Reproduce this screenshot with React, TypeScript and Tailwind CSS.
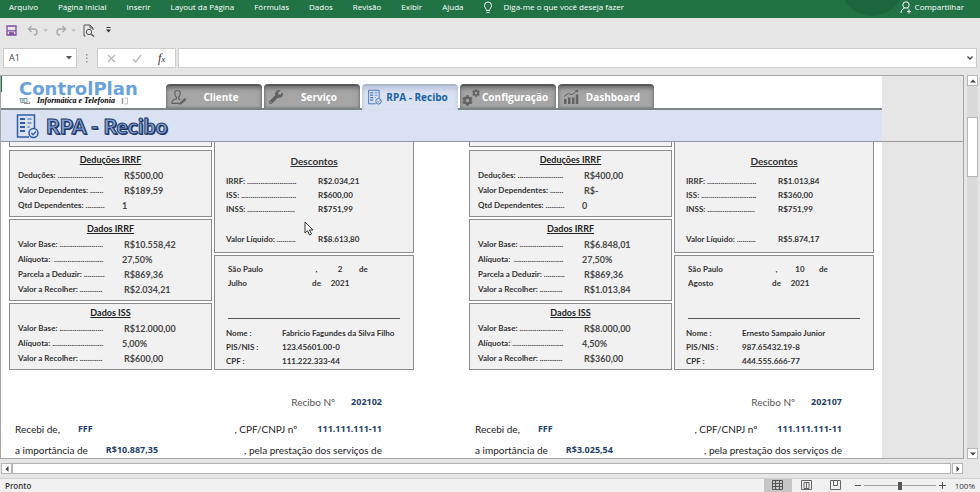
import type { ReactNode } from "react";
import { FaCog, FaWrench } from "react-icons/fa";

const menu = [
  "Arquivo",
  "Página Inicial",
  "Inserir",
  "Layout da Página",
  "Fórmulas",
  "Dados",
  "Revisão",
  "Exibir",
  "Ajuda",
];

type Row = [label: string, value: string];

type Slip = {
  deducoes: Row[];
  irrf: Row[];
  iss: Row[];
  descontos: Row[];
  liquido: string;
  dia: string;
  mes: string;
  pessoa: Row[];
  recibo: string;
  valor: string;
};

const slips: Slip[] = [
  {
    deducoes: [
      ["Deduções: ........................", "R$500,00"],
      ["Valor Dependentes: .......", "R$189,59"],
      ["Qtd Dependentes: ..........", "1"],
    ],
    irrf: [
      ["Valor Base: .......................", "R$10.558,42"],
      ["Alíquota:  ..........................", "27,50%"],
      ["Parcela a Deduzir: ...........", "R$869,36"],
      ["Valor a Recolher: ............", "R$2.034,21"],
    ],
    iss: [
      ["Valor Base: .......................", "R$12.000,00"],
      ["Alíquota: ...........................", "5,00%"],
      ["Valor a Recolher: ............", "R$600,00"],
    ],
    descontos: [
      ["IRRF: ..........................", "R$2.034,21"],
      ["ISS: .............................", "R$600,00"],
      ["INSS: .........................", "R$751,99"],
    ],
    liquido: "R$8.613,80",
    dia: "2",
    mes: "Julho",
    pessoa: [
      ["Nome :", "Fabricio Fagundes da Silva Filho"],
      ["PIS/NIS :", "123.45601.00-0"],
      ["CPF :", "111.222.333-44"],
    ],
    recibo: "202102",
    valor: "R$10.887,35",
  },
  {
    deducoes: [
      ["Deduções: ........................", "R$400,00"],
      ["Valor Dependentes: .......", "R$-"],
      ["Qtd Dependentes: ..........", "0"],
    ],
    irrf: [
      ["Valor Base: .......................", "R$6.848,01"],
      ["Alíquota:  ..........................", "27,50%"],
      ["Parcela a Deduzir: ...........", "R$869,36"],
      ["Valor a Recolher: ............", "R$1.013,84"],
    ],
    iss: [
      ["Valor Base: .......................", "R$8.000,00"],
      ["Alíquota: ...........................", "4,50%"],
      ["Valor a Recolher: ............", "R$360,00"],
    ],
    descontos: [
      ["IRRF: ..........................", "R$1.013,84"],
      ["ISS: .............................", "R$360,00"],
      ["INSS: .........................", "R$751,99"],
    ],
    liquido: "R$5.874,17",
    dia: "10",
    mes: "Agosto",
    pessoa: [
      ["Nome :", "Ernesto Sampaio Junior"],
      ["PIS/NIS :", "987.65432.19-8"],
      ["CPF :", "444.555.666-77"],
    ],
    recibo: "202107",
    valor: "R$3.025,54",
  },
];

function ReceiptIcon({ className }: { className: string }) {
  return (
    <svg viewBox="0 0 24 26" className={className} fill="none" stroke="currentColor" strokeWidth="1.5">
      <path d="M14 24H2.5V2h17v13" />
      <path d="M5 6h5M5 10h5M5 14h5M5 18h5" strokeWidth="1.8" />
      <path d="M12.5 6h4M12.5 10h4M12.5 14h2" strokeWidth="1.2" />
      <circle cx="18.5" cy="20" r="4.5" />
      <path d="m16.300 20 1.700 1.700 3-3.200" strokeWidth="1.3" />
    </svg>
  );
}

function ClientIcon() {
  return (
    <svg viewBox="0 0 16 16" className="size-4" fill="none" stroke="currentColor" strokeWidth="1.2">
      <path d="M6.500 1.500C4 1.500 3.600 3.300 3.800 5c.2 1.600.9 2.600 1.600 3.200v1.600L1.800 11.200C1 11.700 1 13 1 14.300h7.200" />
      <path d="M6.500 1.500C9 1.500 9.400 3.300 9.200 5c-.2 1.600-.9 2.600-1.600 3.200v1.600l1.600.8" />
      <path d="m8.800 13.800 5-4.600 1.500 1.600-5 4.200-2 .3z" fill="currentColor" strokeWidth=".5" />
    </svg>
  );
}

function ChartIcon() {
  return (
    <svg viewBox="0 0 16 16" className="size-4" fill="currentColor">
      <path d="M1 10h2.500v5H1zM5 8.500h2.500V15H5zM9 8.500h2.500V15H9zM12.800 5.500h2.500V15h-2.500z" />
      <path d="m1 7.500 4.500-3.200 3.500 1.400 5-3.900" fill="none" stroke="currentColor" strokeWidth="1" />
      <path d="m12 1 3.200-.3L14.600 4z" />
    </svg>
  );
}

function GearsIcon() {
  return (
    <span className="-ml-[3px] flex shrink-0 items-center">
      <FaCog className="mt-[6px] size-[11px] shrink-0" />
      <FaCog className="mb-[9px] -ml-px size-[8px] shrink-0" />
    </span>
  );
}

const tabs: { name: string; icon: ReactNode; active?: boolean }[] = [
  { name: "Cliente", icon: <ClientIcon /> },
  { name: "Serviço", icon: <FaWrench className="size-[14px]" /> },
  { name: "RPA - Recibo", icon: <ReceiptIcon className="h-4 w-[15px]" />, active: true },
  { name: "Configuração", icon: <GearsIcon /> },
  { name: "Dashboard", icon: <ChartIcon /> },
];

function Ribbon() {
  return (
    <nav className="relative flex h-[18px] shrink-0 items-start overflow-hidden bg-[#217346] pr-4 pl-[9px] font-['Open_Sans',sans-serif] text-[8px] leading-[14px] text-white">
      <span className="absolute -top-12 right-[76px] size-16 rounded-full bg-[#1c653d]" />
      <div className="flex gap-5">
        {menu.map((m) => (
          <button key={m} type="button">
            {m}
          </button>
        ))}
      </div>
      <button type="button" className="ml-5 flex gap-[10px]">
        <svg viewBox="0 0 10 13" className="mt-px h-[13px] w-[10px]" fill="none" stroke="currentColor">
          <path d="M3.500 9.500C3.500 7.500 1.500 7 1.500 4.500a3.500 3.500 0 0 1 7 0c0 2.500-2 3-2 5zM3.500 11.500h3" />
        </svg>
        Diga-me o que você deseja fazer
      </button>
      <button type="button" className="relative ml-auto flex gap-[3px]">
        <svg viewBox="0 0 12 13" className="mt-px h-[13px] w-3" fill="none" stroke="currentColor">
          <circle cx="6" cy="4" r="3.200" />
          <path d="M1 12c0-3 1.500-4 3.500-4.800M7.500 7.200l1 .6M9 8.500v4M7 10.500h4" />
        </svg>
        Compartilhar
      </button>
    </nav>
  );
}

function QuickAccess() {
  return (
    <div className="flex h-[30px] shrink-0 items-center pb-[6px] pl-[6px] text-[#a8a8a8]">
      <button type="button" aria-label="Salvar">
        <svg viewBox="0 0 11 11" className="size-[11px]" fill="none" stroke="#7b4fa3" strokeWidth="1.300">
          <path d="M1 1h9v9H1z" />
          <path d="M1 5.800h9" />
          <path d="M3 7.200h5V10H3z" fill="#7b4fa3" stroke="none" />
        </svg>
      </button>
      <button type="button" aria-label="Desfazer" className="ml-[10px] flex items-center gap-[4px]">
        <svg viewBox="0 0 12 11" className="h-[11px] w-3" fill="none" stroke="currentColor" strokeWidth="1.400">
          <path d="M4.500 1 1.500 4l3 3M1.500 4h5.500c4 0 4 6 0 6" />
        </svg>
        <svg viewBox="0 0 5 3" className="h-[3px] w-[5px]" fill="#c4c4c4">
          <path d="M0 0h5L2.500 3z" />
        </svg>
      </button>
      <button type="button" aria-label="Refazer" className="ml-[7px] flex items-center gap-[4px]">
        <svg viewBox="0 0 12 11" className="h-[11px] w-3" fill="none" stroke="currentColor" strokeWidth="1.400">
          <path d="m7.500 1 3 3-3 3M10.500 4H5C1 4 1 10 5 10" />
        </svg>
        <svg viewBox="0 0 5 3" className="h-[3px] w-[5px]" fill="#c4c4c4">
          <path d="M0 0h5L2.500 3z" />
        </svg>
      </button>
      <button type="button" aria-label="Visualizar impressão" className="ml-[7px]">
        <svg viewBox="0 0 12 13" className="h-[13px] w-3" fill="none" stroke="#555">
          <path d="M2.500 12H1V1h6l3 3v2M7 1v3h3" />
          <circle cx="6" cy="8" r="2.700" />
          <path d="m8 10 3 2.500" strokeWidth="1.400" />
        </svg>
      </button>
      <button type="button" aria-label="Personalizar" className="ml-[11px]">
        <svg viewBox="0 0 5 6" className="h-[6px] w-[5px]" fill="#333">
          <path d="M.500 0h4v1h-4zM0 2.500h5L2.500 5.500z" />
        </svg>
      </button>
    </div>
  );
}

function FormulaBar() {
  return (
    <div className="flex h-[20px] shrink-0 items-stretch pr-[3px] pl-[3px] font-['Open_Sans',sans-serif] text-[9px] text-[#444]">
      <div className="flex w-[74px] items-center border border-[#cdcdcd] bg-white pr-1 pl-[5px]">
        <input aria-label="Caixa de nome" defaultValue="A1" className="w-full min-w-0 outline-none" />
        <svg viewBox="0 0 6 4" className="h-1 w-[6px] shrink-0" fill="#555">
          <path d="M0 0h6L3 3.500z" />
        </svg>
      </div>
      <svg viewBox="0 0 2 9" className="mx-[9px] my-auto h-[9px] w-[2px]" fill="#999">
        <path d="M0 0h1.500v1.500H0zM0 3.500h1.500V5H0zM0 7h1.500v1.500H0z" />
      </svg>
      <div className="flex w-[79px] items-center gap-[16px] border border-[#cdcdcd] bg-white pl-[9px]">
        <button type="button" aria-label="Cancelar">
          <svg viewBox="0 0 9 9" className="size-[9px]" fill="none" stroke="#b5b5b5" strokeWidth="1.200">
            <path d="m1 1 7 7M8 1 1 8" />
          </svg>
        </button>
        <button type="button" aria-label="Inserir">
          <svg viewBox="0 0 10 9" className="h-[9px] w-[10px]" fill="none" stroke="#b5b5b5" strokeWidth="1.300">
            <path d="m1 5 2.700 3L9 1" />
          </svg>
        </button>
        <button type="button" className="font-['Liberation_Serif',serif] text-[12px] leading-3 text-[#333] italic">
          f<span className="text-[9px]">x</span>
        </button>
      </div>
      <div className="ml-[2px] flex flex-1 items-center border border-[#cdcdcd] bg-white pr-[3px]">
        <input aria-label="Barra de fórmulas" className="w-full outline-none" />
        <svg viewBox="0 0 6 4" className="h-1 w-[6px] shrink-0" fill="none" stroke="#444" strokeWidth="1.300">
          <path d="m.500.500 2.500 2.500L5.500.500" />
        </svg>
      </div>
    </div>
  );
}

function SheetHeader() {
  return (
    <header>
      <div className="flex h-[34px] items-end border-b-2 border-[#7f8489] pl-[18px]">
        <div className="w-[147px] self-start pt-[4px]">
          <p className="font-['DejaVu_Sans',sans-serif] text-[18px] leading-[17px] font-bold text-[#69a3dc]">
            ControlPlan
          </p>
          <p className="flex items-center gap-[6px] font-['Liberation_Serif',serif] text-[8px] leading-[8px] font-bold text-black italic">
            <svg viewBox="0 0 12 8" className="h-2 w-3" fill="none" stroke="#777" strokeWidth=".8">
              <path d="M1 1.500h7v4H2zM5 6.500h6l-1-2" />
              <path d="M2 2.500h4v2H3z" fill="#69b7c9" stroke="none" />
            </svg>
            Informática e Telefonia
            <svg viewBox="0 0 7 8" className="h-2 w-[7px]" fill="none" stroke="#999">
              <path d="M1.500 1v6" strokeWidth="1.500" />
              <path d="M3.500 1h3v6h-3" strokeWidth=".600" />
            </svg>
          </p>
        </div>
        <div className="flex items-end gap-[2px]">
          {tabs.map((t) => (
            <button
              key={t.name}
              type="button"
              className={`flex w-24 items-center rounded-t-[4px] border-t-2 pr-2 pl-[5px] font-['Open_Sans',sans-serif] text-[10px] font-bold ${
                t.active
                  ? "-mb-[2px] h-[26px] border-[#aeb6c6] bg-[#d9e1f2] pb-[2px] text-[#1a62a5] shadow-[inset_0_3px_4px_#b9c3da]"
                  : "h-[24px] border-[#595959] bg-[#a5a5a5] text-white shadow-[inset_0_2px_4px_#6b6b6b,inset_0_0_2px_#6b6b6b]"
              }`}
            >
              <span className={`flex w-[17px] shrink-0 ${t.active ? "text-[#4472b8]" : "text-[#626262]"}`}>{t.icon}</span>
              <span className="flex-1 text-center">{t.name}</span>
            </button>
          ))}
        </div>
      </div>
      <div className="flex h-8 items-center gap-[7px] border-b border-[#8e96a6] bg-[#d9e1f2] pl-[14px]">
        <ReceiptIcon className="h-[26px] w-6 text-[#2f5da8]" />
        <h1 className="font-['Lato',sans-serif] text-[21px] leading-6 font-black text-[#7f9fd6] [-webkit-text-stroke:1px_#1f3864] [text-shadow:1px_1px_0_#1f3864]">
          RPA - Recibo
        </h1>
      </div>
    </header>
  );
}

function DataCard({ title, rows }: { title: string; rows: Row[] }) {
  return (
    <section className="border border-[#8c8c8c] bg-[#f1f1f1] px-2 pt-px pb-[3px]">
      <h2 className="text-center text-[9px] leading-4 font-bold text-[#222] underline">{title}</h2>
      <dl>
        {rows.map(([label, value]) => (
          <div key={label} className="flex leading-[15px] font-bold">
            <dt className="w-[104px] text-[8px] whitespace-pre">{label}</dt>
            <dd className={`text-[9px] text-[#484848] ${value.startsWith("R$") ? "pl-[2px]" : ""}`}>{value}</dd>
          </div>
        ))}
      </dl>
    </section>
  );
}

function ReceiptSlip({ slip }: { slip: Slip }) {
  return (
    <article className="w-[405px] shrink-0 font-['Lato',sans-serif] text-[#333]">
      <div className="flex gap-[2px]">
        <div className="flex w-[203px] flex-col gap-[2px]">
          <div className="mb-px h-[5px] border border-t-0 border-[#8c8c8c] bg-[#f1f1f1]" />
          <DataCard title="Deduções IRRF" rows={slip.deducoes} />
          <DataCard title="Dados IRRF" rows={slip.irrf} />
          <DataCard title="Dados ISS" rows={slip.iss} />
        </div>
        <div className="flex w-[200px] flex-col gap-[2px] text-[8px] leading-[14px] font-bold">
          <section className="border border-t-0 border-[#8c8c8c] bg-[#f1f1f1] px-[11px] pt-[9px] pb-[6px]">
            <h2 className="mb-[3px] text-center text-[10px] leading-5 underline">Descontos</h2>
            <dl>
              {slip.descontos.map(([label, value]) => (
                <div key={label} className="flex">
                  <dt className="w-[92px]">{label}</dt>
                  <dd>{value}</dd>
                </div>
              ))}
              <div className="mt-4 flex">
                <dt className="w-[92px]">Valor Líquido: ..........</dt>
                <dd>{slip.liquido}</dd>
              </div>
            </dl>
          </section>
          <section className="border border-[#8c8c8c] bg-[#f1f1f1] pt-[6px] pb-px">
            <div className="mx-[13px] grid grid-cols-[84px_9px_38px_1fr] border-b border-[#555] pb-7">
              <span>São Paulo</span>
              <span className="text-center">,</span>
              <span className="text-center">{slip.dia}</span>
              <span>de</span>
              <span>{slip.mes}</span>
              <span className="text-center">de</span>
              <span className="text-center">2021</span>
            </div>
            <dl className="mt-[7px] px-[11px]">
              {slip.pessoa.map(([label, value]) => (
                <div key={label} className="flex">
                  <dt className="w-14">{label}</dt>
                  <dd>{value}</dd>
                </div>
              ))}
            </dl>
          </section>
        </div>
      </div>

      <div className="pt-6 pr-8 pl-[6px] text-[10px] leading-4 text-[#222]">
        <p className="flex justify-end gap-4 text-[#555]">
          Recibo Nº <Filled>{slip.recibo}</Filled>
        </p>
        <div className="mt-[11px] flex justify-between">
          <p className="flex gap-[18px]">
            Recebi de, <Filled>FFF</Filled>
          </p>
          <p className="flex gap-5">
            , CPF/CNPJ nº <Filled>111.111.111-11</Filled>
          </p>
        </div>
        <div className="mt-[5px] flex justify-between">
          <p className="flex gap-[18px]">
            a importância de <Filled>{slip.valor}</Filled>
          </p>
          <p>, pela prestação dos serviços de</p>
        </div>
      </div>
    </article>
  );
}

function Filled({ children }: { children: ReactNode }) {
  return <span className="font-['Open_Sans',sans-serif] text-[9px] font-bold text-[#1f4068]">{children}</span>;
}

function Arrow({ d, label }: { d: string; label: string }) {
  return (
    <button type="button" aria-label={label} className="flex size-[11px] shrink-0 items-center justify-center border border-[#b5b5b5] bg-white">
      <svg viewBox="0 0 6 6" className="size-[6px]" fill="#444">
        <path d={d} />
      </svg>
    </button>
  );
}

function StatusBar() {
  return (
    <footer className="flex h-[14px] shrink-0 items-center border-t border-[#cfcfcf] bg-[#f1f1f1] pr-[5px] pl-[5px] font-['Open_Sans',sans-serif] text-[8px] leading-3 font-semibold text-[#333]">
      <span className="mr-auto">Pronto</span>
      <button type="button" aria-label="Normal" className="flex h-full w-7 items-center justify-center bg-[#c6c6c6]">
        <svg viewBox="0 0 11 11" className="size-[11px]" fill="none" stroke="#555">
          <path d="M.500.500h10v9H.500zM.500 3.500h10M.500 6.500h10M3.500.500v9M7.500.500v9" />
        </svg>
      </button>
      <button type="button" aria-label="Layout da Página" className="flex w-[29px] justify-center">
        <svg viewBox="0 0 11 11" className="size-[11px]" fill="none" stroke="#666">
          <path d="M.500.500h10v9H.500zM3 2.500h5v6H3zM5.500 2.500v6" />
        </svg>
      </button>
      <button type="button" aria-label="Quebra de página" className="flex w-[29px] justify-center">
        <svg viewBox="0 0 11 11" className="size-[11px]" fill="none" stroke="#666">
          <path d="M.500.500h10v9H.500zM3.500.500v5h4v-5" />
        </svg>
      </button>
      <button type="button" aria-label="Reduzir" className="ml-[5px] flex w-[6px] items-center">
        <span className="h-px w-full bg-[#555]" />
      </button>
      <input
        type="range"
        aria-label="Zoom"
        defaultValue={50}
        className="mx-[3px] h-[9px] w-[72px] appearance-none bg-[linear-gradient(#a3a3a3,#a3a3a3)] bg-[length:100%_1px] bg-center bg-no-repeat [&::-webkit-slider-thumb]:h-[8px] [&::-webkit-slider-thumb]:w-[4px] [&::-webkit-slider-thumb]:appearance-none [&::-webkit-slider-thumb]:bg-[#555]"
      />
      <button type="button" aria-label="Ampliar" className="mr-[9px]">
        <svg viewBox="0 0 7 7" className="size-[7px]" stroke="#555">
          <path d="M0 3.500h7M3.500 0v7" />
        </svg>
      </button>
      <span className="font-normal">100%</span>
    </footer>
  );
}

export default function App() {
  return (
    <div className="flex h-screen flex-col overflow-hidden bg-[#e6e6e6]">
      <Ribbon />
      <QuickAccess />
      <FormulaBar />

      <div className="mt-[7px] flex min-h-0 flex-1">
        <main className="relative flex flex-1 overflow-hidden border border-[#a6a6a6]">
          <span className="absolute top-0 left-0 h-4 w-px bg-[#217346]" />
          <div className="flex-1 overflow-hidden bg-white">
            <SheetHeader />
            <div className="flex gap-[55px] pl-2">
              {slips.map((s) => (
                <ReceiptSlip key={s.recibo} slip={s} />
              ))}
            </div>
          </div>
          <div className="w-[81px] shrink-0">
            <div className="h-[66px] border-b border-[#9c9c9c]" />
          </div>
          <svg viewBox="0 0 10 16" className="absolute top-[145px] left-[303px] h-4 w-[10px]" fill="#fff" stroke="#333">
            <path d="M1 1v11l2.500-2.300L5.500 14l2-1-2-4H9z" />
          </svg>
        </main>
        <div className="mr-[2px] ml-[3px] flex w-[11px] flex-col bg-[#dadada]">
          <Arrow label="Rolar para cima" d="M0 4.500h6L3 1.500z" />
          <div className="mt-[31px] h-[60px] border border-[#b5b5b5] bg-white" />
          <div className="mt-auto">
            <Arrow label="Rolar para baixo" d="M0 1.500h6L3 4.500z" />
          </div>
        </div>
      </div>

      <div className="mt-[4px] mr-[17px] mb-[4px] ml-[1px] flex shrink-0">
        <Arrow label="Rolar para a esquerda" d="M4.500 0v6L1.500 3z" />
        <div className="mr-px flex-1 border border-[#b5b5b5] bg-white" />
        <Arrow label="Rolar para a direita" d="M1.500 0v6L4.500 3z" />
      </div>
      <StatusBar />
    </div>
  );
}
